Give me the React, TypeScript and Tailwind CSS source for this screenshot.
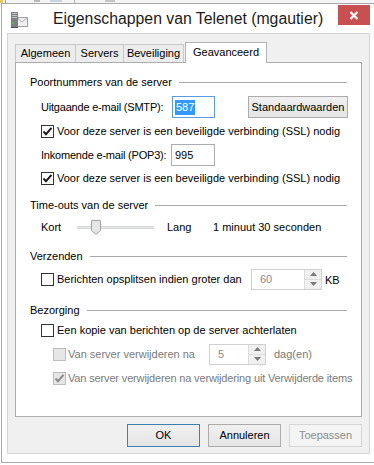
function Check({ checked = false, disabled = false }: { checked?: boolean; disabled?: boolean }) {
  return (
    <div
      className={
        'w-[13px] h-[13px] shrink-0 border flex items-center justify-center ' +
        (disabled ? 'border-[#bcbcbc] bg-[#e6e6e6]' : 'border-[#333333] bg-white')
      }
    >
      {checked && (
        <svg width="11" height="11" viewBox="0 0 11 11">
          <path
            d="M1.5 5.5 L4 8.2 L9.5 1.8"
            fill="none"
            stroke={disabled ? '#8a8a8a' : '#1a1a1a'}
            strokeWidth="1.9"
          />
        </svg>
      )}
    </div>
  )
}

function SectionHeader({ title }: { title: string }) {
  return (
    <div className="flex items-center h-[20px] pl-[14px] pr-[14px]">
      <span>{title}</span>
      <div className="flex-1 ml-[7px] h-px bg-[#a9a9a9]" />
    </div>
  )
}

function Spinner({ value, width }: { value: string; width: string }) {
  return (
    <div className={'h-[21px] shrink-0 flex border border-[#d0d0d0] bg-white ' + width}>
      <div className="flex-1 pl-[8px] flex items-center text-[#8a8a8a]">{value}</div>
      <div className="w-[17px] flex flex-col border-l border-[#dcdcdc] bg-[#f0f0f0]">
        <div className="flex-1 flex items-center justify-center border-b border-[#dcdcdc]">
          <svg width="7" height="4" viewBox="0 0 7 4">
            <path d="M0 4 L3.5 0 L7 4 Z" fill="#7a7a7a" />
          </svg>
        </div>
        <div className="flex-1 flex items-center justify-center">
          <svg width="7" height="4" viewBox="0 0 7 4">
            <path d="M0 0 L3.5 4 L7 0 Z" fill="#7a7a7a" />
          </svg>
        </div>
      </div>
    </div>
  )
}

function DialogButton({
  label,
  isDefault,
  disabled,
}: {
  label: string
  isDefault?: boolean
  disabled?: boolean
}) {
  return (
    <div
      className={
        'w-[73px] h-[23px] flex items-center justify-center border ' +
        (disabled
          ? 'border-[#d5d5d5] bg-[#f4f4f4] text-[#8c8c8c]'
          : isDefault
            ? 'border-[#3c7fb1] bg-gradient-to-b from-[#f0f0f0] to-[#e5e5e5] text-black'
            : 'border-[#acacac] bg-gradient-to-b from-[#f0f0f0] to-[#e5e5e5] text-black')
      }
    >
      {label}
    </div>
  )
}

export default function App() {
  return (
    <div className="w-[374px] h-[465px] bg-white overflow-hidden font-['Liberation_Sans',Arial,sans-serif] text-[11px] text-black leading-none whitespace-nowrap">
      {/* desktop strip behind the window */}
      <div className="h-[3px] flex items-start bg-[#f4f4f4]">
        <div className="w-[3px] h-[3px] bg-[#e8c766]" />
        <div className="ml-[2px] w-px h-[3px] bg-[#9a9a9a]" />
        <div className="ml-[28px] w-[6px] h-[2px] bg-[#b9b9b9]" />
        <div className="ml-[10px] w-[12px] h-[2px] bg-[#c9d6e2]" />
        <div className="ml-[12px] w-px h-[3px] bg-[#b0b0b0]" />
        <div className="ml-[30px] w-[10px] h-[2px] bg-[#c6c6c6]" />
      </div>

      {/* window */}
      <div className="ml-px w-[373px] border-l border-t border-b border-[#a9a9a9] bg-white pl-[5px] pb-[8px]">
        {/* title bar */}
        <div className="h-[29px] flex items-start">
          <div className="mt-[7px] ml-[3px] shrink-0">
            <svg width="18" height="18" viewBox="0 0 18 18">
              <rect x="6.5" y="6.5" width="11" height="9" fill="#eeeeee" stroke="#a0a0a0" />
              <path d="M6.5 6.5 L12 11 L17.5 6.5" fill="none" stroke="#b0b0b0" />
              <rect x="1" y="1" width="7" height="15" fill="#7d8083" />
              <rect x="2" y="2" width="5" height="1" fill="#c2c5c8" />
              <rect x="2" y="4" width="5" height="1" fill="#c2c5c8" />
              <rect x="2" y="6" width="5" height="1" fill="#c2c5c8" />
              <rect x="2" y="11" width="2" height="2" fill="#5bbd3a" />
              <rect x="1" y="16" width="7" height="1" fill="#4b4d50" />
            </svg>
          </div>
          <div className="flex-1 h-[30px] flex items-center pl-[25px] text-[15.8px] text-[#1b1b1b]">
            Eigenschappen van Telenet (mgautier)
          </div>
          <div className="mt-[1px] w-[32px] h-[20px] bg-[#c75050] flex items-center justify-center shrink-0">
            <svg width="10" height="9" viewBox="0 0 10 9">
              <path d="M1.5 1 L8.5 8 M8.5 1 L1.5 8" stroke="white" strokeWidth="2.2" />
            </svg>
          </div>
          <div className="w-[4px]" />
        </div>

        {/* client area */}
        <div className="w-[363px] h-[421px] border border-[#d4d4d4] bg-[#f0f0f0] pt-[8px] px-[7px]">
          {/* tabs */}
          <div className="flex items-end h-[20px]">
            <div className="w-[61px] h-[18px] border-l border-t border-r border-[#c9c9c9] bg-[#ececec] flex items-center justify-center">
              Algemeen
            </div>
            <div className="w-[48px] h-[18px] border-t border-r border-[#c9c9c9] bg-[#ececec] flex items-center justify-center">
              Servers
            </div>
            <div className="w-[60px] h-[18px] border-t border-r border-[#c9c9c9] bg-[#ececec] flex items-center justify-center">
              Beveiliging
            </div>
            <div className="relative z-10 -mb-px ml-px w-[82px] h-[21px] border-l border-t border-r border-[#b3b3b3] bg-white flex items-center justify-center pb-[2px]">
              Geavanceerd
            </div>
          </div>

          {/* tab panel */}
          <div className="w-[347px] h-[355px] border border-[#adadad] bg-white pt-[9px]">
            <SectionHeader title="Poortnummers van de server" />

            <div className="mt-[4px] h-[22px] flex items-center pl-[25px]">
              <span className="w-[131px] tracking-[-0.2px]">Uitgaande e-mail (SMTP):</span>
              <div className="w-[43px] h-[22px] border border-[#569de5] bg-white flex items-center pl-[2px]">
                <span className="bg-[#3399ff] text-white px-px py-[2px]">587</span>
              </div>
              <div className="ml-[33px] w-[100px] h-[22px] border border-[#acacac] bg-gradient-to-b from-[#f0f0f0] to-[#e5e5e5] flex items-center justify-center">
                Standaardwaarden
              </div>
            </div>

            <div className="mt-[3px] h-[20px] flex items-center pl-[25px] gap-[3px]">
              <Check checked />
              <span>Voor deze server is een beveiligde verbinding (SSL) nodig</span>
            </div>

            <div className="mt-[3px] h-[22px] flex items-center pl-[25px]">
              <span className="w-[130px] tracking-[-0.2px]">Inkomende e-mail (POP3):</span>
              <div className="w-[44px] h-[22px] border border-[#abadb3] bg-white flex items-center pl-[3px]">
                995
              </div>
            </div>

            <div className="mt-[2px] h-[20px] flex items-center pl-[25px] gap-[3px]">
              <Check checked />
              <span>Voor deze server is een beveiligde verbinding (SSL) nodig</span>
            </div>

            <div className="mt-[7px]">
              <SectionHeader title="Time-outs van de server" />
            </div>

            <div className="mt-[2px] h-[20px] flex items-center pl-[25px]">
              <span className="w-[36px]">Kort</span>
              <div className="relative w-[77px] h-[20px] flex items-center">
                <div className="w-full h-[3px] bg-[#e7eaea] border-y border-[#d6d6d6]" />
                <svg className="absolute left-[14px] top-[3px]" width="10" height="15" viewBox="0 0 10 15">
                  <path d="M0.5 0.5 H9.5 V10.5 L5 14.5 L0.5 10.5 Z" fill="#e5e5e5" stroke="#a3a3a3" />
                </svg>
              </div>
              <span className="ml-[13px] w-[46px]">Lang</span>
              <span>1 minuut 30 seconden</span>
            </div>

            <div className="mt-[9px]">
              <SectionHeader title="Verzenden" />
            </div>

            <div className="mt-[2px] h-[22px] flex items-center pl-[25px]">
              <Check />
              <span className="ml-[3px] w-[194px]">Berichten opsplitsen indien groter dan</span>
              <Spinner value="60" width="w-[71px]" />
              <span className="ml-[3px] mt-[3px]">KB</span>
            </div>

            <div className="mt-[10px]">
              <SectionHeader title="Bezorging" />
            </div>

            <div className="h-[20px] flex items-center pl-[25px] gap-[3px]">
              <Check />
              <span>Een kopie van berichten op de server achterlaten</span>
            </div>

            <div className="mt-[3px] h-[22px] flex items-center pl-[37px] text-[#7a7a7a]">
              <Check disabled />
              <span className="ml-[2px] w-[141px]">Van server verwijderen na</span>
              <Spinner value="5" width="w-[57px]" />
              <span className="ml-[8px]">dag(en)</span>
            </div>

            <div className="mt-[3px] h-[20px] flex items-center pl-[37px] text-[#7a7a7a]">
              <Check checked disabled />
              <span className="ml-[2px] tracking-[-0.15px]">
                Van server verwijderen na verwijdering uit Verwijderde items
              </span>
            </div>
          </div>

          {/* buttons */}
          <div className="mt-[7px] flex justify-end gap-[8px]">
            <DialogButton label="OK" isDefault />
            <DialogButton label="Annuleren" />
            <DialogButton label="Toepassen" disabled />
          </div>
        </div>
      </div>
    </div>
  )
}
